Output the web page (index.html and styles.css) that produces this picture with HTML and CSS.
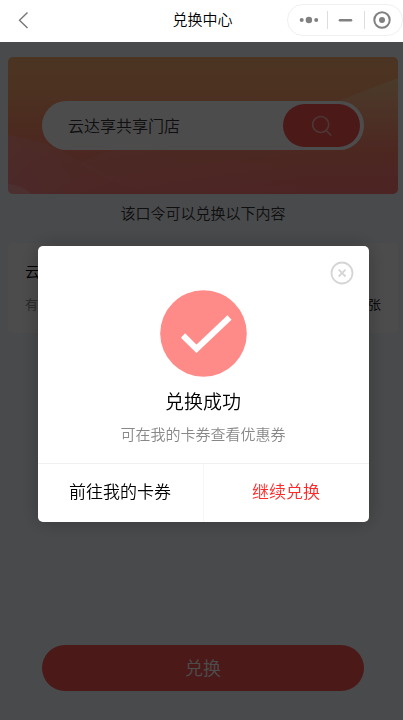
FILE: index.html
```html
<!DOCTYPE html>
<html lang="zh-CN">
<head>
<meta charset="utf-8">
<title>兑换中心</title>
<link rel="stylesheet" href="styles.css">
</head>
<body>
<header class="navbar">
  <svg class="back" width="12" height="18" viewBox="0 0 12 18"><path d="M9.5 1.5 1.5 9.3 9.5 17"/></svg>
  <h1>兑换中心</h1>
  <div class="capsule">
    <svg width="115" height="30" viewBox="0 0 115 30">
      <g class="dots"><circle cx="13.7" cy="15" r="2"/><circle cx="20.9" cy="15" r="3.2"/><circle cx="28.2" cy="15" r="2"/></g>
      <path class="sep" d="M39.5 6v18M76.5 6v18"/>
      <path class="dash" d="M52 15.3h11"/>
      <circle class="ring" cx="94" cy="15" r="7.7"/><circle class="dots" cx="94" cy="15" r="3"/>
    </svg>
  </div>
</header>
<main class="page">
  <section class="banner">
    <svg class="waves" width="390" height="137" viewBox="0 0 390 137">
      <defs>
        <linearGradient id="ray" x1="0" y1="0" x2="0" y2="1"><stop offset="0" stop-color="#eaffc0" stop-opacity=".3"/><stop offset=".65" stop-color="#fff" stop-opacity=".1"/><stop offset="1" stop-color="#fff" stop-opacity="0"/></linearGradient>
        <linearGradient id="wave" x1="0" y1="0" x2="1" y2="0"><stop offset="0" stop-color="#ff9da5" stop-opacity=".45"/><stop offset="1" stop-color="#ff8d80" stop-opacity=".1"/></linearGradient>
        <linearGradient id="hill" x1="0" y1="0" x2="1" y2="0"><stop offset="0" stop-color="#ff9c98" stop-opacity=".25"/><stop offset="1" stop-color="#ff9c98" stop-opacity="0"/></linearGradient>
      </defs>
      <path fill="url(#ray)" d="M390 21 325 46 230 93H390z"/>
      <path fill="url(#hill)" d="M72 107C88 95 112 91 142 88H300V137H145C115 130 94 119 72 107z"/>
      <path fill="url(#wave)" d="M0 78C26 82 49 90 70 102 94 115 115 130 145 137H0z"/>
      <path fill="#fff" fill-opacity=".2" d="M0 127Q13 128 24 137H0z"/>
    </svg>
    <div class="search">
      <span>云达享共享门店</span>
      <div class="search-btn"><svg width="20" height="21" viewBox="0 0 20 21"><circle cx="8.7" cy="9.5" r="8"/><path d="m14.2 15.5 5 5"/></svg></div>
    </div>
  </section>
  <p class="tip">该口令可以兑换以下内容</p>
  <section class="card">
    <div class="card-title">云达享优惠券</div>
    <div class="card-row"><span>有效期</span><b>1张</b></div>
  </section>
  <div class="submit">兑换</div>
</main>
<div class="mask">
  <div class="dialog">
    <svg class="close" width="24" height="24" viewBox="0 0 24 24"><circle cx="12" cy="12" r="10.5"/><path d="m8.7 8.7 6.8 6.8m0-6.8-6.8 6.8"/></svg>
    <svg class="success" width="87" height="87" viewBox="0 0 87 87"><circle cx="43.5" cy="43.5" r="43.3"/><path d="m23 45.5 13.5 13.3L69.5 27.5"/></svg>
    <h2>兑换成功</h2>
    <p>可在我的卡券查看优惠券</p>
    <div class="actions"><div>前往我的卡券</div><div class="primary">继续兑换</div></div>
  </div>
</div>
</body>
</html>
```
FILE: styles.css
```css
* { box-sizing: border-box; }
body { margin: 0; height: 720px; overflow: hidden; display: flex; flex-direction: column; background: #f3f7fb; color: #000; font-family: "Noto Sans CJK SC", sans-serif; font-weight: 350; }
h1, h2, p { margin: 0; font-weight: inherit; }
svg { display: block; fill: none; }
.navbar { height: 42px; flex: none; background: #fff; display: grid; grid-template-columns: 118px 1fr 116px; align-items: center; }
.back { margin-left: 18px; margin-top: -2px; stroke: #777; stroke-width: 1.4; }
.navbar h1 { font-size: 15px; line-height: 22px; text-align: center; margin-top: -4px; }
.capsule { width: 116px; height: 32px; margin-top: -2px; border: 1px solid #f0f0f0; border-radius: 16px; }
.dots { fill: #808080; }
.sep { stroke: #ddd; }
.dash { stroke: #808080; stroke-width: 2.6; stroke-linecap: round; }
.ring { stroke: #808080; stroke-width: 2; }
.page { flex: 1; padding: 15px 5px 29px 8px; display: flex; flex-direction: column; }
.banner { height: 137px; border-radius: 5px; position: relative; overflow: hidden; padding: 44px 34px; background: linear-gradient(#ffb074 0%, #ffa870 22%, #ff906a 50%, #ff8570 68%, #ff7a78 100%); }
.waves { position: absolute; left: 0; top: 0; }
.search { position: relative; height: 49px; border-radius: 25px; background: #fff; display: flex; align-items: center; justify-content: space-between; padding: 0 4px 0 26px; font-size: 16px; color: #333; }
.search span { line-height: 24px; margin-top: -2px; }
.search-btn { width: 77px; height: 43px; border-radius: 22px; background: #fc5452; display: flex; align-items: center; justify-content: center; }
.search-btn svg { stroke: #ffb3b1; stroke-width: 1.7; }
.tip { font-size: 15px; line-height: 22px; text-align: center; margin-top: 8px; color: #333; }
.card { height: 90px; margin-top: 19px; border-radius: 5px; background: #fff; padding: 17px 17px; }
.card-title { font-size: 15px; line-height: 22px; }
.card-row { display: flex; justify-content: space-between; margin-top: 12px; font-size: 13px; line-height: 20px; color: #888; }
.card-row b { font-weight: inherit; color: #000; }
.submit { height: 46px; border-radius: 23px; margin: auto 34px 0; background: #fc5452; color: #fff; font-size: 18px; line-height: 45px; text-align: center; }
.mask { position: fixed; top: 42px; left: 0; right: 0; bottom: 0; background: rgba(0, 0, 0, .7); padding: 204px 34.5px 0 37.5px; }
.dialog { position: relative; height: 276px; border-radius: 5px; background: #fff; box-shadow: 0 0 20px rgba(0, 0, 0, .25); padding-top: 44px; display: flex; flex-direction: column; align-items: center; }
.close { position: absolute; right: 15px; top: 15px; stroke: #d5d5d5; stroke-width: 1.8; }
.success circle { fill: #ff8b89; }
.success path { stroke: #fff; stroke-width: 6; }
.dialog h2 { font-size: 19px; line-height: 28px; margin-top: 10px; }
.dialog p { font-size: 15px; line-height: 22px; margin-top: 8px; color: #888; }
.actions { align-self: stretch; margin-top: auto; height: 59px; border-top: 1px solid #f0f0f0; display: flex; font-size: 17px; line-height: 54px; text-align: center; }
.actions div { flex: 1; }
.actions .primary { border-left: 1px solid #f6f6f6; color: #ff2929; }
```
